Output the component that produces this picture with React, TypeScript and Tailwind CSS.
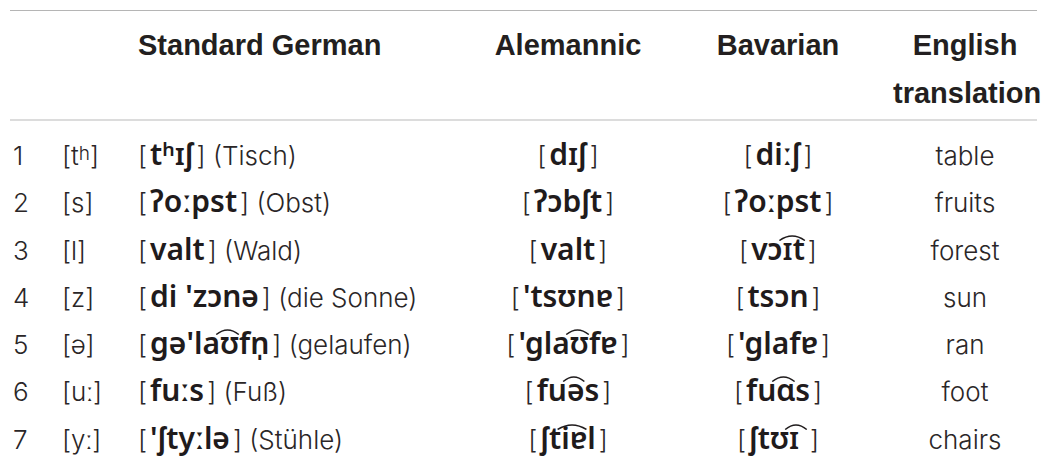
import React from 'react';

type Row = {
  n: string;
  sound: React.ReactNode;
  std: string;
  word: string;
  ale: string;
  bav: string;
  en: string;
};

// {..} marks letters joined by a tie bar
const rows: Row[] = [
  { n: '1', sound: <>[t<sup className="relative -top-[5px] text-[19px]">h</sup>]</>, std: 'tʰɪʃ', word: '(Tisch)', ale: 'dɪʃ', bav: 'diːʃ', en: 'table' },
  { n: '2', sound: '[s]', std: 'ʔoːpst', word: '(Obst)', ale: 'ʔɔbʃt', bav: 'ʔoːpst', en: 'fruits' },
  { n: '3', sound: '[l]', std: 'valt', word: '(Wald)', ale: 'valt', bav: 'vɔ{ɪt}', en: 'forest' },
  { n: '4', sound: '[z]', std: "di 'zɔnə", word: '(die Sonne)', ale: "'tsʊnɐ", bav: 'tsɔn', en: 'sun' },
  { n: '5', sound: '[ə]', std: "gə'la{ʊ}fn̩", word: '(gelaufen)', ale: "'gla{ʊ}fɐ", bav: "'glafɐ", en: 'ran' },
  { n: '6', sound: '[uː]', std: 'fuːs', word: '(Fuß)', ale: 'fu{ə}s', bav: 'fu{ɑ}s', en: 'foot' },
  { n: '7', sound: '[yː]', std: "'ʃtyːlə", word: '(Stühle)', ale: 'ʃt{iɐ}l', bav: 'ʃtʊ{ɪ\u00a0}', en: 'chairs' },
];

const cols = 'grid grid-cols-[50px_78px_335px_190px_230px_144px]';

const Tie = ({ children }: { children: string }) => (
  <span className="relative inline-block leading-none">
    {children}
    <svg
      className="absolute -top-[1px] left-[-5px] w-[calc(100%+6px)] h-[8px]"
      viewBox="0 0 20 8"
      preserveAspectRatio="none"
    >
      <path d="M1 7.5 Q10 -1.5 19 7.5" fill="none" stroke="#1f1b1c" strokeWidth="1.5" vectorEffect="non-scaling-stroke" />
    </svg>
  </span>
);

const Ipa = ({ text }: { text: string }) => {
  const parts = text.split(/(\{[^}]*\})/).filter(Boolean);
  return (
    <span className="whitespace-nowrap">
      [<span className="font-['Noto_Sans',sans-serif] font-semibold text-[30px] text-[#1f1b1c] px-[3px]">
        {parts.map((p, i) =>
          p.startsWith('{') ? <Tie key={i}>{p.slice(1, -1)}</Tie> : <React.Fragment key={i}>{p}</React.Fragment>
        )}
      </span>]
    </span>
  );
};

const App: React.FC = () => {
  return (
    <div className="w-[1049px] h-[469px] bg-white pt-[10px] pl-[10px] font-['Inter','Liberation_Sans',Arial,sans-serif] text-[#2a2627]">
      <div className="w-[1027px]">
        <div className="border-t border-[#b5b5b5]" />
        <div className={`${cols} pt-[10px] pb-[2px] text-[29px] leading-[48px] font-bold text-[#231f20] font-['Liberation_Sans',Arial,sans-serif]`}>
          <div />
          <div />
          <div>Standard German</div>
          <div className="text-center">Alemannic</div>
          <div className="text-center">Bavarian</div>
          <div className="text-center">English translation</div>
        </div>
        <div className="border-t-2 border-[#dcdcdc]" />
        <div className="pt-[9px] text-[26px] leading-[47.3px] font-light">
          {rows.map((r) => (
            <div key={r.n} className={`${cols} h-[47.3px] items-baseline`}>
              <div className="pl-[3px]">{r.n}</div>
              <div className="pl-[2px] whitespace-nowrap">{r.sound}</div>
              <div className="whitespace-nowrap">
                <Ipa text={r.std} /> {r.word}
              </div>
              <div className="text-center"><Ipa text={r.ale} /></div>
              <div className="text-center"><Ipa text={r.bav} /></div>
              <div className="text-center">{r.en}</div>
            </div>
          ))}
        </div>
      </div>
    </div>
  );
};

export default App;
